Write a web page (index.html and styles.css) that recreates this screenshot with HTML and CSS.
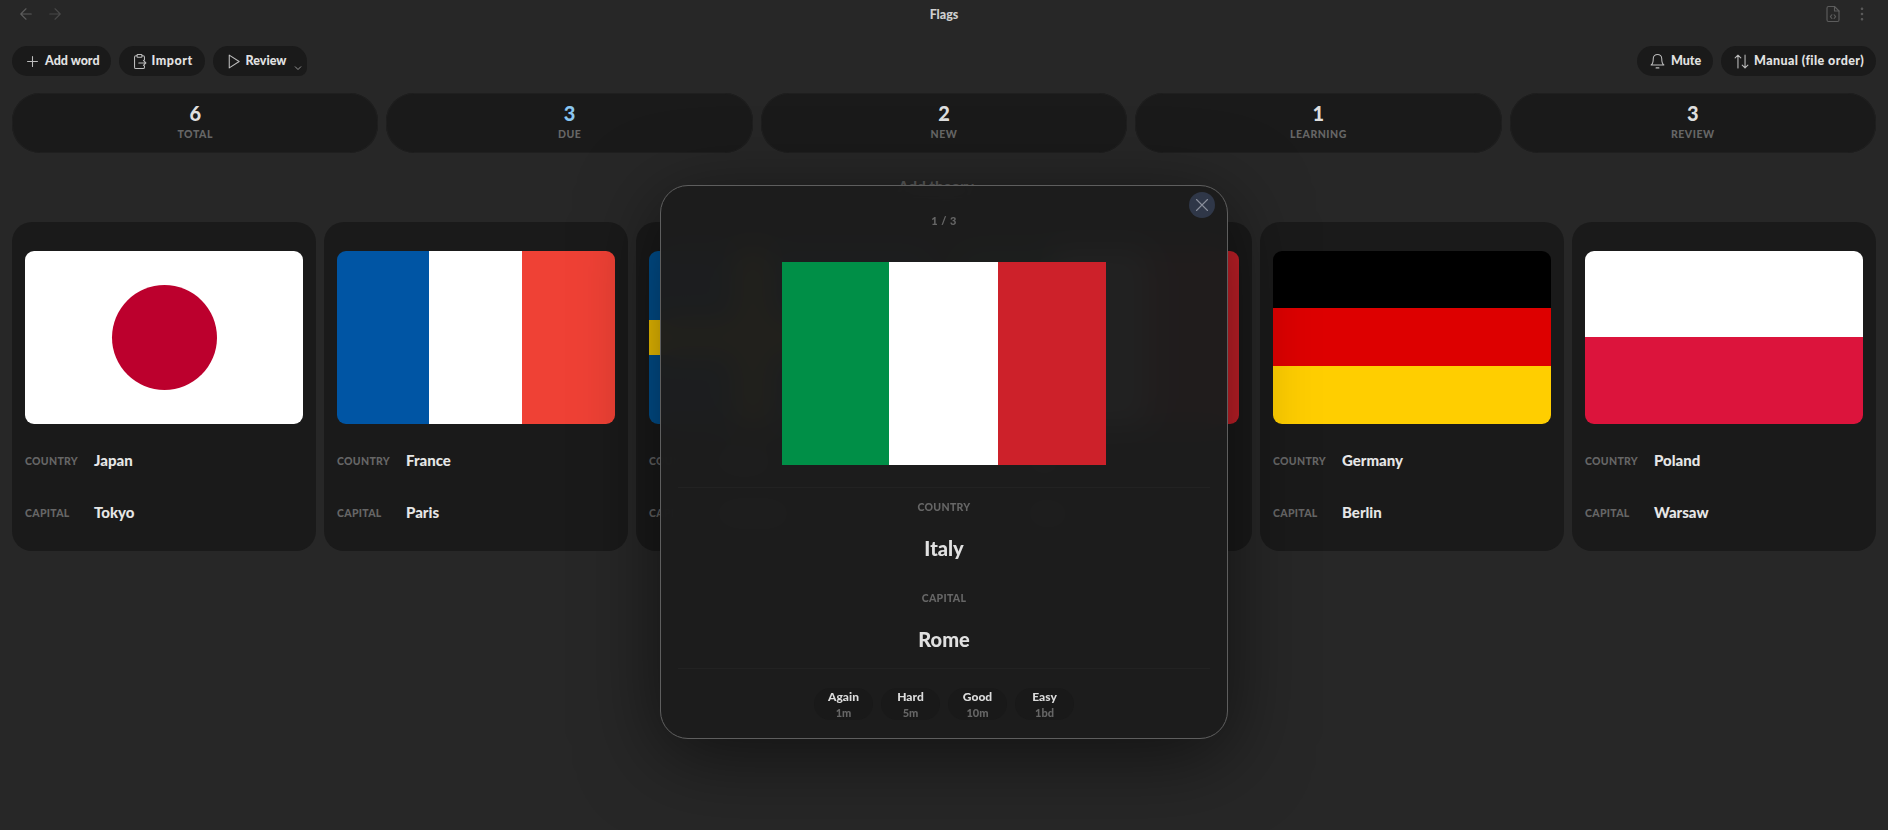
FILE: index.html
```html
<!DOCTYPE html>
<html lang="en">
<head>
  <meta charset="UTF-8" />
  <title>Flags</title>
  <link rel="stylesheet" href="styles.css">
</head>
<body>
  <header class="topbar">
    <div class="nav">
      <svg class="icon dim" viewBox="0 0 24 24"><path d="M19 12H5M12 19l-7-7 7-7"/></svg>
      <svg class="icon dimmer" viewBox="0 0 24 24"><path d="M5 12h14M12 5l7 7-7 7"/></svg>
    </div>
    <div class="title">Flags</div>
    <div class="nav nav-right">
      <svg class="icon dim" viewBox="0 0 24 24"><path d="M14 2H6a2 2 0 0 0-2 2v16a2 2 0 0 0 2 2h12a2 2 0 0 0 2-2V8z"/><path d="M14 2v6h6M10.500 13l-2 2.500 2 2.500M13.500 13l2 2.500-2 2.500"/></svg>
      <svg class="icon dim" viewBox="0 0 24 24"><circle cx="12" cy="5" r="1"/><circle cx="12" cy="12" r="1"/><circle cx="12" cy="19" r="1"/></svg>
    </div>
  </header>

  <div class="toolbar">
    <div class="group">
      <button class="pill pill-add">
        <svg class="icon" viewBox="0 0 24 24"><path d="M12 5v14M5 12h14"/></svg><span>Add word</span>
      </button>
      <button class="pill pill-import">
        <svg class="icon" viewBox="0 0 24 24"><path d="M8.500 4H7a2 2 0 0 0-2 2v14a2 2 0 0 0 2 2h10a2 2 0 0 0 2-2v-2M15.500 4H17a2 2 0 0 1 2 2v4"/><rect x="8.500" y="2" width="7" height="4" rx="1"/><path d="M11 14h10M17.500 10.500 21 14l-3.500 3.500"/></svg><span>Import</span>
      </button>
      <button class="pill pill-review">
        <svg class="icon" viewBox="0 0 24 24"><path d="M6 3l14 9-14 9z"/></svg><span>Review</span>
        <svg class="chevron" viewBox="0 0 24 24"><path d="M6 9l6 6 6-6"/></svg>
      </button>
    </div>
    <div class="group">
      <button class="pill pill-mute">
        <svg class="icon" viewBox="0 0 24 24"><path d="M6 8a6 6 0 0 1 12 0c0 7 3 9 3 9H3s3-2 3-9"/><path d="M10 21h4"/></svg><span>Mute</span>
      </button>
      <button class="pill pill-sort">
        <svg class="icon" viewBox="0 0 24 24"><path d="M7 21V3M3 7l4-4 4 4M17 3v18M13 17l4 4 4-4"/></svg><span>Manual (file order)</span>
      </button>
    </div>
  </div>

  <section class="stats">
    <div class="stat"><b>6</b><span>TOTAL</span></div>
    <div class="stat"><b class="due">3</b><span>DUE</span></div>
    <div class="stat"><b>2</b><span>NEW</span></div>
    <div class="stat"><b>1</b><span>LEARNING</span></div>
    <div class="stat"><b>3</b><span>REVIEW</span></div>
  </section>

  <div class="theory">Add theory</div>

  <main class="grid">
    <article class="card">
      <div class="flag flag-japan"></div>
      <div class="row"><span class="label">COUNTRY</span><span class="value">Japan</span></div>
      <div class="row"><span class="label">CAPITAL</span><span class="value">Tokyo</span></div>
    </article>
    <article class="card">
      <div class="flag flag-france"></div>
      <div class="row"><span class="label">COUNTRY</span><span class="value">France</span></div>
      <div class="row"><span class="label">CAPITAL</span><span class="value">Paris</span></div>
    </article>
    <article class="card">
      <div class="flag flag-sweden"></div>
      <div class="row"><span class="label">COUNTRY</span><span class="value">Sweden</span></div>
      <div class="row"><span class="label">CAPITAL</span><span class="value">Stockholm</span></div>
    </article>
    <article class="card">
      <div class="flag flag-italy"></div>
      <div class="row"><span class="label">COUNTRY</span><span class="value">Italy</span></div>
      <div class="row"><span class="label">CAPITAL</span><span class="value">Rome</span></div>
    </article>
    <article class="card">
      <div class="flag flag-germany"></div>
      <div class="row"><span class="label">COUNTRY</span><span class="value">Germany</span></div>
      <div class="row"><span class="label">CAPITAL</span><span class="value">Berlin</span></div>
    </article>
    <article class="card">
      <div class="flag flag-poland"></div>
      <div class="row"><span class="label">COUNTRY</span><span class="value">Poland</span></div>
      <div class="row"><span class="label">CAPITAL</span><span class="value">Warsaw</span></div>
    </article>
  </main>

  <!-- Review dialog -->
  <div class="modal">
    <button class="close">
      <svg class="icon" viewBox="0 0 24 24"><path d="M18 6 6 18M6 6l12 12"/></svg>
    </button>
    <div class="counter">1 / 3</div>
    <div class="modal-flag flag-italy"></div>
    <div class="answers">
      <div class="label">COUNTRY</div>
      <div class="answer">Italy</div>
      <div class="label">CAPITAL</div>
      <div class="answer">Rome</div>
    </div>
    <div class="grades">
      <button class="grade"><b>Again</b><span>1m</span></button>
      <button class="grade"><b>Hard</b><span>5m</span></button>
      <button class="grade"><b>Good</b><span>10m</span></button>
      <button class="grade"><b>Easy</b><span>1bd</span></button>
    </div>
  </div>
</body>
</html>
```

FILE: styles.css
```css
/* Base */
html, body {
  margin: 0;
  height: 830px;
  overflow: hidden;
  background-color: #272727;
  color: #e6e6e6;
  font-family: "Lato", "Liberation Sans", sans-serif;
  font-weight: 900;
}

button {
  font: inherit;
  color: inherit;
  border: none;
  cursor: pointer;
}

.icon {
  width: 18px;
  height: 18px;
  flex: none;
  fill: none;
  stroke: currentColor;
  stroke-width: 1.5;
  stroke-linecap: round;
  stroke-linejoin: round;
}

.dim { color: #5c5c5c; }
.dimmer { color: #484848; }

/* Top bar */
.topbar {
  height: 28px;
  padding: 0 17px;
  display: grid;
  grid-template-columns: 1fr auto 1fr;
  align-items: center;
}

.nav {
  display: flex;
  gap: 11px;
}

.nav-right {
  justify-content: flex-end;
}

.title {
  font-size: 12.500px;
  color: #cfcfcf;
}

/* Toolbar */
.toolbar {
  margin-top: 18px;
  padding: 0 12px;
  display: flex;
  justify-content: space-between;
}

.group {
  display: flex;
  gap: 8px;
}

.pill {
  height: 30px;
  padding: 0 12px;
  display: flex;
  align-items: center;
  gap: 4px;
  border-radius: 15px;
  background-color: #1a1a1a;
  color: #e2e2e2;
  font-size: 12.500px;
}

.pill span {
  margin-bottom: 2px;
}

.pill .icon {
  width: 17px;
  height: 17px;
  color: #bdbdbd;
}

.pill-add {
  padding-right: 11px;
}

.pill-import span {
  letter-spacing: 0.5px;
}

.pill-review {
  position: relative;
  padding-right: 21px;
  border-bottom-right-radius: 8px;
}

.pill-mute {
  padding-right: 12px;
  gap: 5px;
}

.pill-sort span {
  letter-spacing: 0.4px;
}

.chevron {
  position: absolute;
  right: 3px;
  bottom: 2px;
  width: 12px;
  height: 12px;
  fill: none;
  stroke: #bdbdbd;
  stroke-width: 1.5;
}

/* Stats */
.stats {
  margin-top: 17px;
  padding: 0 12px;
  display: grid;
  grid-template-columns: repeat(5, 1fr);
  gap: 8px;
}

.stat {
  height: 60px;
  box-sizing: border-box;
  padding-top: 9px;
  border-radius: 28px;
  background-color: #1a1a1a;
  box-shadow: inset 0 0 0 1px #1f1f1f;
  display: flex;
  flex-direction: column;
  align-items: center;
}

.stat b {
  font-size: 20px;
  line-height: 22px;
  color: #dedede;
}

.stat b.due {
  color: #8ac7f2;
}

.stat span {
  margin-top: 3px;
  font-size: 10.500px;
  line-height: 14px;
  letter-spacing: 0.5px;
  color: #666;
}

.theory {
  height: 69px;
  padding: 24px 16px 0 0;
  box-sizing: border-box;
  text-align: center;
  font-size: 15px;
  color: #5a5a5a;
}

/* Cards */
.grid {
  padding: 0 12px;
  display: grid;
  grid-template-columns: repeat(6, 1fr);
  gap: 8px;
}

.card {
  height: 329px;
  box-sizing: border-box;
  padding: 29px 13px 13px;
  border-radius: 20px;
  background-color: #1a1a1a;
}

.flag {
  height: 173px;
  margin-bottom: 10px;
  border-radius: 9px;
}

.row {
  height: 52px;
  display: flex;
  align-items: center;
}

.label {
  font-size: 10.500px;
  letter-spacing: 0.3px;
  color: #666;
}

.row .label {
  width: 69px;
  padding-top: 1px;
}

.value {
  font-size: 15px;
  color: #e6e6e6;
}

/* Flags */
.flag-japan {
  display: flex;
  align-items: center;
  justify-content: center;
  background-color: #fff;
}

.flag-japan::before {
  content: "";
  width: 105px;
  height: 105px;
  border-radius: 50%;
  background-color: #bc002d;
}

.flag-france {
  background: linear-gradient(90deg, #0055a4 33%, #fff 33%, #fff 66.700%, #ef4135 66.700%);
}

.flag-italy {
  background: linear-gradient(90deg, #008f47 33%, #fff 33%, #fff 66.700%, #cd212a 66.700%);
}

.flag-germany {
  background: linear-gradient(180deg, #000 33%, #d00 33%, #d00 66.700%, #ffce00 66.700%);
}

.flag-poland {
  background: linear-gradient(180deg, #fff 50%, #dc143c 50%);
}

.flag-sweden {
  background:
    linear-gradient(180deg, transparent 40%, #fecc00 40%, #fecc00 60%, transparent 60%),
    linear-gradient(90deg, transparent 31%, #fecc00 31%, #fecc00 44%, transparent 44%),
    #005293;
}

/* Modal */
.modal {
  position: fixed;
  top: 185px;
  left: 660px;
  width: 568px;
  height: 554px;
  box-sizing: border-box;
  padding: 28px 17px 0;
  display: flex;
  flex-direction: column;
  align-items: center;
  border: 1px solid #5e5e5e;
  border-radius: 28px;
  background-color: rgba(29, 29, 29, 0.98);
  backdrop-filter: blur(14px);
  box-shadow: 0 16px 80px rgba(0, 0, 0, 0.55);
}

.close {
  position: absolute;
  top: 6px;
  right: 12px;
  width: 26px;
  height: 26px;
  padding: 0;
  display: flex;
  align-items: center;
  justify-content: center;
  border-radius: 50%;
  background-color: #2f3748;
  color: #8a8f9c;
}

.close .icon {
  width: 22px;
  height: 22px;
  stroke-width: 1.200;
}

.counter {
  height: 14px;
  font-size: 11px;
  line-height: 14px;
  letter-spacing: 0.5px;
  color: #666;
}

.modal-flag {
  width: 324px;
  height: 203px;
  margin-top: 34px;
  flex: none;
}

.answers {
  align-self: stretch;
  height: 182px;
  margin-top: 22px;
  padding-top: 10px;
  box-sizing: border-box;
  border-top: 1px solid #222;
  border-bottom: 1px solid #222;
  text-align: center;
}

.answers .label {
  height: 18px;
  line-height: 18px;
}

.answer {
  height: 46px;
  margin: 9px 0 18px;
  line-height: 46px;
  font-size: 20px;
  color: #e0e0e0;
}

.grades {
  margin-top: 19px;
  display: flex;
  gap: 8px;
}

.grade {
  width: 59px;
  height: 32px;
  padding: 0;
  display: flex;
  flex-direction: column;
  align-items: center;
  justify-content: center;
  border-radius: 16px;
  background-color: #191919;
}

.grade b {
  font-size: 12px;
  line-height: 16px;
  color: #dcdcdc;
}

.grade span {
  font-size: 11px;
  line-height: 15px;
  color: #666;
}
```
